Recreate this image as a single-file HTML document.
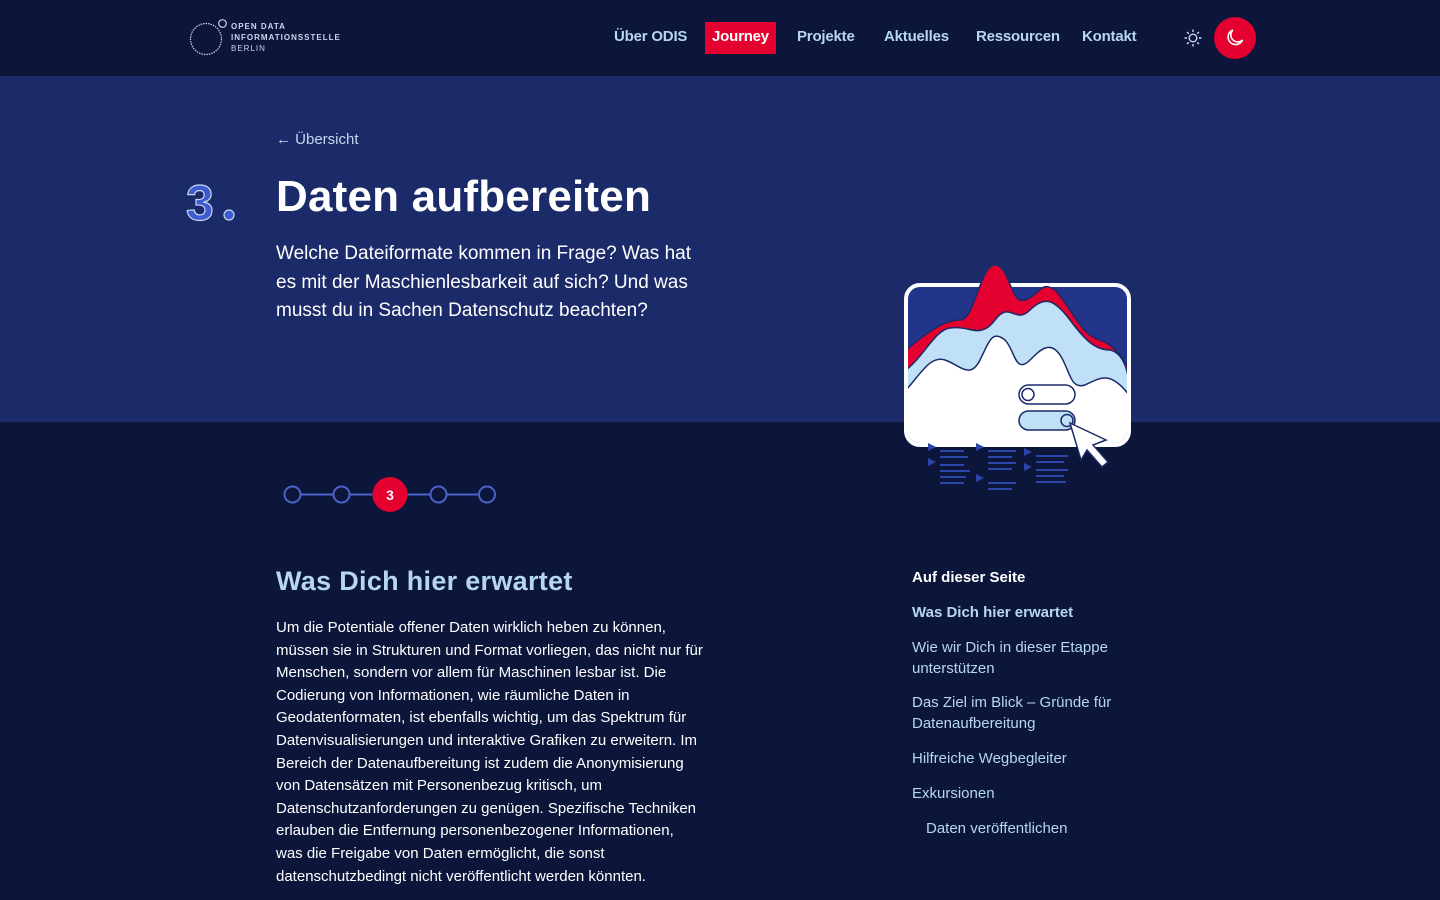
<!DOCTYPE html>
<html><head><meta charset="utf-8"><style>
*{margin:0;padding:0;box-sizing:border-box}
body{width:1440px;height:900px;overflow:hidden;background:#0c163b;font-family:"Liberation Sans",sans-serif;position:relative}
.nav{position:absolute;top:0;left:0;width:1440px;height:76px;background:#0c163b}
.hero{position:absolute;top:76px;left:0;width:1440px;height:346px;background:#1b2a68}
.abs{position:absolute}
.nl{position:absolute;top:28px;font-size:15px;font-weight:bold;color:#b6d6f2;letter-spacing:-0.2px}
.toc{position:absolute;left:912px;font-size:15px;color:#b6d6f2;line-height:21px}
</style></head><body>
<div class="nav"></div>
<div class="hero"></div>
<svg class="abs" style="left:188px;top:18px" width="42" height="40"><circle cx="18" cy="21" r="15.5" fill="none" stroke="#c9d6ea" stroke-width="1.2" stroke-dasharray="1.5 1"/><circle cx="34.5" cy="5.5" r="3.8" fill="none" stroke="#c9d6ea" stroke-width="1.2"/></svg>
<div class="abs" style="left:231px;top:21px;font-size:8px;font-weight:bold;color:#c9d6ea;letter-spacing:1px;line-height:11px">OPEN DATA<br>INFORMATIONSSTELLE<br><span style="font-weight:normal">BERLIN</span></div>
<div class="nl" style="left:614px">Über ODIS</div>
<div class="abs" style="left:705px;top:22px;width:71px;height:32px;background:#e4002f"></div>
<div class="nl" style="left:712px;color:#fff">Journey</div>
<div class="nl" style="left:797px">Projekte</div>
<div class="nl" style="left:884px">Aktuelles</div>
<div class="nl" style="left:976px">Ressourcen</div>
<div class="nl" style="left:1082px">Kontakt</div>
<svg class="abs" style="left:1183px;top:28px" width="20" height="20" stroke="#c9d6ea" stroke-width="1.4" fill="none"><circle cx="10" cy="10" r="3.8"/><path d="M10 1.5v2.5M10 16v2.5M1.5 10h2.5M16 10h2.5M4 4l1.8 1.8M14.2 14.2L16 16M4 16l1.8-1.8M14.2 5.8L16 4"/></svg>
<div class="abs" style="left:1214px;top:17px;width:42px;height:42px;border-radius:50%;background:#e4002f"></div>
<svg class="abs" style="left:1224px;top:27px" width="22" height="22" fill="none" stroke="#fff" stroke-width="1.6"><path d="M9 3a7.5 7.5 0 1 0 9.5 10A6 6 0 0 1 9 3z"/></svg>
<div class="abs" style="left:276px;top:131px;font-size:15px;color:#c9d6ea">← Übersicht</div>
<svg class="abs" style="left:183px;top:170px" width="60" height="60"><text x="3" y="50" font-size="50" font-weight="bold" font-family="Liberation Sans" fill="#3d5bd0" stroke="#c9d6ea" stroke-width="1.2">3</text><circle cx="46" cy="45" r="5" fill="#3d5bd0" stroke="#c9d6ea" stroke-width="1.2"/></svg>
<div class="abs" style="left:276px;top:172px;font-size:44px;font-weight:bold;color:#fff;letter-spacing:0.2px">Daten aufbereiten</div>
<div class="abs" style="left:276px;top:240px;width:440px;font-size:19px;line-height:28.5px;color:#fff">Welche Dateiformate kommen in Frage? Was hat es mit der Maschienlesbarkeit auf sich? Und was musst du in Sachen Datenschutz beachten?</div>
<svg class="abs" style="left:900px;top:260px" width="240" height="235">
<rect x="6" y="25" width="223" height="160" rx="14" fill="#23358a"/>
<rect x="6" y="25" width="223" height="160" rx="14" fill="none" stroke="#fff" stroke-width="4"/>
<clipPath id="c"><rect x="8" y="0" width="219" height="183" rx="12"/></clipPath>
<g clip-path="url(#c)" stroke="#1b2a68" stroke-width="1.5">
<path d="M6 90 C30 70 45 60 60 60 C75 60 80 5 95 5 C110 5 110 45 125 40 C140 35 140 20 155 30 C170 45 180 75 200 80 C215 85 225 100 229 110 V185 H6Z" fill="#e4002f"/>
<path d="M6 110 C25 95 35 70 50 68 C70 65 80 80 95 60 C110 40 115 65 130 50 C145 35 155 40 170 60 C185 80 195 90 210 90 C220 92 229 105 229 130 V185 H6Z" fill="#bfe0f6"/>
<path d="M6 130 C20 115 30 95 45 100 C60 105 70 120 80 100 C90 80 92 70 105 80 C115 90 115 115 130 100 C140 90 150 80 160 95 C170 110 170 130 185 125 C200 118 210 110 229 135 V185 H6Z" fill="#fff"/>
</g>
<rect x="119" y="125" width="56" height="19" rx="9.5" fill="#fff" stroke="#1b2a68" stroke-width="1.5"/><circle cx="128" cy="134.5" r="6" fill="#fff" stroke="#1b2a68" stroke-width="1.5"/>
<rect x="119" y="151" width="56" height="19" rx="9.5" fill="#bfe0f6" stroke="#1b2a68" stroke-width="1.5"/><circle cx="167" cy="160.5" r="6" fill="#bfe0f6" stroke="#1b2a68" stroke-width="1.5"/>
<path d="M170 163 L206 180 L193 185 L208 202 L202 207 L187 190 L181 200Z" fill="#fff" stroke="#1b2a68" stroke-width="1.5"/>
<g fill="#2d44a8"><path d="M28 183l8 4-8 4zM76 183l8 4-8 4zM124 188l8 4-8 4zM28 198l8 4-8 4zM124 203l8 4-8 4zM76 214l8 4-8 4z"/>
<rect x="40" y="190" width="24" height="2"/><rect x="40" y="196" width="28" height="2"/><rect x="40" y="204" width="24" height="2"/><rect x="40" y="210" width="30" height="2"/><rect x="40" y="216" width="26" height="2"/><rect x="40" y="222" width="24" height="2"/>
<rect x="88" y="190" width="28" height="2"/><rect x="88" y="196" width="24" height="2"/><rect x="88" y="202" width="28" height="2"/><rect x="88" y="208" width="24" height="2"/><rect x="88" y="222" width="28" height="2"/><rect x="88" y="228" width="24" height="2"/>
<rect x="136" y="195" width="32" height="2"/><rect x="136" y="201" width="28" height="2"/><rect x="136" y="209" width="32" height="2"/><rect x="136" y="215" width="28" height="2"/><rect x="136" y="221" width="30" height="2"/></g>
</svg>
<svg class="abs" style="left:280px;top:475px" width="225" height="40"><g fill="none" stroke="#4a63c9" stroke-width="2"><path d="M21 19.5h32M70 19.5h23M127 19.5h23M167 19.5h32"/><circle cx="12.5" cy="19.5" r="8"/><circle cx="61.5" cy="19.5" r="8"/><circle cx="158.5" cy="19.5" r="8"/><circle cx="207" cy="19.5" r="8"/></g><circle cx="110" cy="19.5" r="17.5" fill="#e4002f"/><text x="110" y="25" fill="#fff" font-size="14" font-weight="bold" text-anchor="middle" font-family="Liberation Sans">3</text></svg>
<div class="abs" style="left:276px;top:566px;font-size:27px;font-weight:bold;color:#b6d6f2;letter-spacing:0.3px">Was Dich hier erwartet</div>
<div class="abs" style="left:276px;top:617px;width:428px;font-size:15px;line-height:22.6px;color:#fff">Um die Potentiale offener Daten wirklich heben zu können, müssen sie in Strukturen und Format vorliegen, das nicht nur für Menschen, sondern vor allem für Maschinen lesbar ist. Die Codierung von Informationen, wie räumliche Daten in Geodatenformaten, ist ebenfalls wichtig, um das Spektrum für Datenvisualisierungen und interaktive Grafiken zu erweitern. Im Bereich der Datenaufbereitung ist zudem die Anonymisierung von Datensätzen mit Personenbezug kritisch, um Datenschutzanforderungen zu genügen. Spezifische Techniken erlauben die Entfernung personenbezogener Informationen, was die Freigabe von Daten ermöglicht, die sonst datenschutzbedingt nicht veröffentlicht werden könnten.</div>
<div class="toc" style="top:567px;color:#fff;font-weight:bold">Auf dieser Seite</div>
<div class="toc" style="top:602px;font-weight:bold">Was Dich hier erwartet</div>
<div class="toc" style="top:637px">Wie wir Dich in dieser Etappe<br>unterstützen</div>
<div class="toc" style="top:692px">Das Ziel im Blick – Gründe für<br>Datenaufbereitung</div>
<div class="toc" style="top:748px">Hilfreiche Wegbegleiter</div>
<div class="toc" style="top:783px">Exkursionen</div>
<div class="toc" style="top:818px;left:926px">Daten veröffentlichen</div>
</body></html>
